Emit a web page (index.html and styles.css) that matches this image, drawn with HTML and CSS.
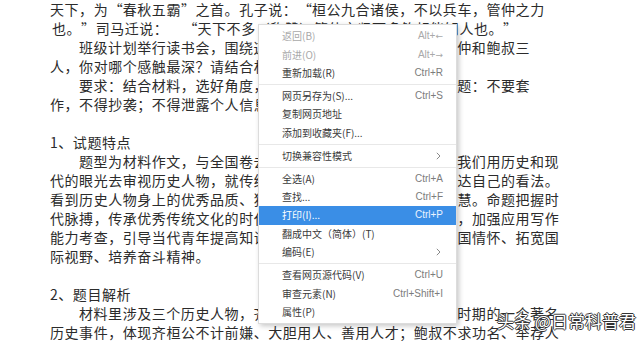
FILE: index.html
```html
<!DOCTYPE html>
<html lang="zh-CN">
<head>
<meta charset="utf-8">
<title>context menu</title>
<link rel="stylesheet" href="styles.css">
</head>
<body>
<div class="page">
  <div class="doc">
    <p class="ln">天下，为<span class="qo">“</span>春秋五霸<span class="qc">”</span>之首。孔子说：<span class="qo">“</span>桓公九合诸侯，不以兵车，管仲之力</p>
    <p class="ln split"><span>也。<span class="qc">”</span>司马迁说：　<span class="qo">“</span>天下不多（称赞）管仲之贤而多鲍叔能知人</span><span>也。<span class="qc">”</span></span></p>
    <p class="ln ind">班级计划举行读书会，围绕这则材料展开讨论。齐桓公、管仲和鲍叔三</p>
    <p class="ln">人，你对哪个感触最深？请结合材料写一篇文章。</p>
    <p class="ln ind">要求：结合材料，选好角度，确定立意，明确文体，自拟标题：不要套</p>
    <p class="ln">作，不得抄袭；不得泄露个人信息；不少于800字。</p>
    <p class="ln"></p>
    <p class="ln">1、试题特点</p>
    <p class="ln ind">题型为材料作文，与全国卷去年的作文题目相似，都是要求我们用历史和现</p>
    <p class="ln">代的眼光去审视历史人物，就传统文化和当代生活的关系，来表达自己的看法。</p>
    <p class="ln">看到历史人物身上的优秀品质、独特的人格魅力和为人处世的智慧。命题把握时</p>
    <p class="ln">代脉搏，传承优秀传统文化的时代价值和现实意义，注重思辨性，加强应用写作</p>
    <p class="ln">能力考查，引导当代青年提高知识文化素养，增强文化自信和家国情怀、拓宽国</p>
    <p class="ln">际视野、培养奋斗精神。</p>
    <p class="ln"></p>
    <p class="ln">2、题目解析</p>
    <p class="ln ind">材料里涉及三个历史人物，齐桓公、管仲、鲍叔，讲述春秋时期的一个著名</p>
    <p class="ln">历史事件，体现齐桓公不计前嫌、大胆用人、善用人才；鲍叔不求功名、举荐人</p>
  </div>

  <div class="menu">
    <div class="item dis"><span>返回(B)</span><span class="key">Alt+<span class="arr">←</span></span></div>
    <div class="item dis"><span>前进(O)</span><span class="key">Alt+<span class="arr">→</span></span></div>
    <div class="item"><span>重新加载(R)</span><span class="key">Ctrl+R</span></div>
    <div class="sep"></div>
    <div class="item"><span>网页另存为(S)...</span><span class="key">Ctrl+S</span></div>
    <div class="item"><span>复制网页地址</span></div>
    <div class="item"><span>添加到收藏夹(F)...</span></div>
    <div class="sep"></div>
    <div class="item"><span>切换兼容性模式</span><svg class="chev" width="5" height="8" viewBox="0 0 5 8"><path d="M0.8 0.8 L4 4 L0.8 7.2" fill="none" stroke="#8a8a8a" stroke-width="1"/></svg></div>
    <div class="sep"></div>
    <div class="item"><span>全选(A)</span><span class="key">Ctrl+A</span></div>
    <div class="item"><span>查找...</span><span class="key">Ctrl+F</span></div>
    <div class="item on"><span>打印(I)...</span><span class="key">Ctrl+P</span></div>
    <div class="item"><span>翻成中文（简体）(T)</span></div>
    <div class="item"><span>编码(E)</span><svg class="chev" width="5" height="8" viewBox="0 0 5 8"><path d="M0.8 0.8 L4 4 L0.8 7.2" fill="none" stroke="#8a8a8a" stroke-width="1"/></svg></div>
    <div class="sep"></div>
    <div class="item"><span>查看网页源代码(V)</span><span class="key">Ctrl+U</span></div>
    <div class="item"><span>审查元素(N)</span><span class="key">Ctrl+Shift+I</span></div>
    <div class="item"><span>属性(P)</span></div>
  </div>

  <div class="mark">头条 @日常科普君</div>
</div>
</body>
</html>
```
FILE: styles.css
```css
html, body {
  margin: 0;
  padding: 0;
  background: #ffffff;
}

.page {
  position: relative;
  width: 640px;
  height: 341px;
  overflow: hidden;
  background: #ffffff;
}

.doc {
  padding: 0 0 0 50px;
  font-family: "Noto Sans CJK SC", "Noto Sans", sans-serif;
  font-size: 14px;
  letter-spacing: 0.55px;
  line-height: 19px;
  color: #2b2b2b;
  text-spacing-trim: space-all;
}

.qo,
.qc {
  display: inline-block;
  width: 14.55px;
  letter-spacing: 0;
}

.qo {
  text-align: right;
}

.qc {
  text-align: left;
}

.ln {
  margin: 0;
  height: 19px;
  white-space: nowrap;
}

.split {
  display: flex;
  justify-content: space-between;
  width: 452px;
  padding-left: 2px;
}

.ind {
  padding-left: 29px;
}

.menu {
  position: absolute;
  left: 258px;
  top: 24px;
  width: 199px;
  box-sizing: border-box;
  padding: 2px 0;
  background: #ffffff;
  border: 1px solid #dcdcdc;
  box-shadow: 2px 2px 5px rgba(0, 0, 0, 0.22);
  font-family: "Noto Sans CJK SC", "Noto Sans", sans-serif;
  font-size: 10px;
  line-height: 12px;
  color: #3a3a3a;
}

.item {
  display: flex;
  justify-content: space-between;
  align-items: center;
  height: 18.4px;
  padding: 0 13px 0 23px;
}

.item.dis {
  color: #a9a9a9;
}

.key {
  font-family: "Liberation Sans", sans-serif;
  font-size: 10px;
  color: #7c7c7c;
}

.arr {
  font-family: "DejaVu Sans", sans-serif;
  font-size: 9px;
}

.item.dis .key {
  color: #a9a9a9;
}

.chev {
  margin-right: 2px;
}

.item.on {
  background: #3a8ee6;
  color: #ffffff;
}

.item.on .key {
  color: #eaf3ff;
}

.sep {
  height: 1px;
  margin: 1.8px 0;
  background: #e8e8e8;
}

.mark {
  position: absolute;
  left: 497px;
  top: 311px;
  font-family: "Noto Sans CJK SC", sans-serif;
  font-size: 17px;
  line-height: 20px;
  color: #ffffff;
  text-shadow: -1px 0 0 #333, 1px 0 0 #333, 0 -1px 0 #333, 0 1px 0 #333;
  white-space: nowrap;
}
```
